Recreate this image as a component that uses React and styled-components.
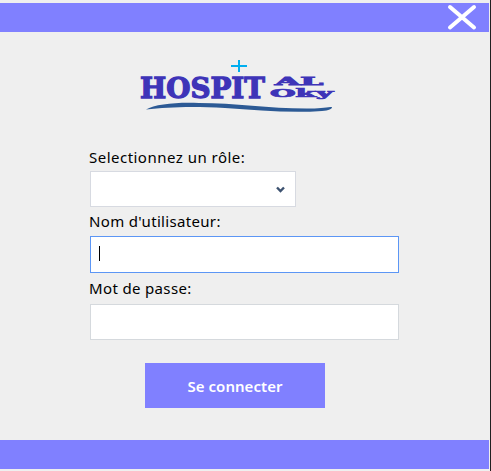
import React from 'react';
import styled, { createGlobalStyle } from 'styled-components';

const GlobalStyle = createGlobalStyle`
  * { box-sizing: border-box; }
  body { margin: 0; background: #efefef; overflow: hidden; }
`;

const Window = styled.main`
  width: 491px;
  height: 471px;
  padding: 3px 1px 2px 0;
  display: flex;
  flex-direction: column;
  background: #efefef;
  border-right: 1px solid #202020;
  font-family: 'Noto Sans', 'Open Sans', sans-serif;
  color: #000;
`;

const Bar = styled.div`
  flex: none;
  height: 29px;
  background: #8080ff;
  display: flex;
  justify-content: flex-end;
`;

const CloseButton = styled.button`
  width: 42px;
  height: 29px;
  padding: 0;
  border: 0;
  background: none;
  svg { display: block; }
`;

const Content = styled.div`
  flex: 1;
  display: flex;
  flex-direction: column;
`;

const Logo = styled.svg`
  display: block;
  flex: none;
  margin: 23px 0 0 134px;
`;

const Form = styled.form`
  margin: 29px 0 0 90px;
  width: 309px;
  display: flex;
  flex-direction: column;
`;

const Label = styled.label`
  height: ${(p) => p.$height}px;
  margin-left: -1px;
  font-size: 15px;
  line-height: 22px;
  letter-spacing: ${(p) => p.$spacing}px;
  white-space: nowrap;
`;

const Select = styled.div`
  width: 206px;
  height: 36px;
  margin-bottom: 3px;
  padding-right: 10px;
  display: flex;
  align-items: center;
  justify-content: flex-end;
  background: #fff;
  border: 1px solid #d7dae1;
`;

const Field = styled.div`
  height: ${(p) => (p.$focused ? 37 : 36)}px;
  margin-bottom: ${(p) => (p.$focused ? 4 : 0)}px;
  padding: 9px 8px;
  background: #fff;
  border: 1px solid ${(p) => (p.$focused ? '#5c96f5' : '#d5d9dd')};
`;

const Caret = styled.span`
  display: block;
  width: 1px;
  height: 15px;
  background: #000;
`;

const Submit = styled.button`
  width: 180px;
  height: 45px;
  margin: 23px 0 0 55px;
  padding: 2px 0 0;
  border: 0;
  background: #8080ff;
  color: #fff;
  font: 600 15px/43px 'Noto Sans', 'Open Sans', sans-serif;
  letter-spacing: 0.05px;
`;

export default function App() {
  return (
    <>
      <GlobalStyle />
      <Window>
        <Bar>
          <CloseButton aria-label="Fermer">
            <svg width="42" height="29" viewBox="0 0 42 29">
              <path d="M3 4 L27 24.5 M27 4 L3 24.5" stroke="#fff" strokeWidth="4" strokeLinecap="round" />
            </svg>
          </CloseButton>
        </Bar>
        <Content>
          <Logo width="206" height="62" viewBox="134 55 206 62" aria-label="Hospital Oky">
            <path d="M239 60 V72 M231 66 H247" stroke="#00aeef" strokeWidth="2" />
            <g fill="#3e34b8" stroke="#3e34b8" fontFamily="'DejaVu Serif', serif" fontWeight="700">
              <text x="140" y="97.5" fontSize="28" strokeWidth="1.3" textLength="125" lengthAdjust="spacingAndGlyphs">HOSPIT</text>
              <text x="275" y="84.8" fontSize="10.5" strokeWidth="0.8" textLength="48" lengthAdjust="spacingAndGlyphs">AL</text>
              <text x="270" y="96.7" fontSize="10.5" strokeWidth="0.7" textLength="63" lengthAdjust="spacingAndGlyphs">Oky</text>
            </g>
            <path
              d="M146 109.5 C155 104 178 102 199 103 C236 103 272 109 311 108.5 C321 108.5 328 107 332 107 C332 109 329 110.5 322 111 C290 113.5 257 110 225 108 C192 106 168 107 146 109.5 Z"
              fill="#2c5a95"
            />
          </Logo>
          <Form>
            <Label $height={25} $spacing={0.48}>Selectionnez un rôle:</Label>
            <Select role="combobox" aria-expanded="false">
              <svg width="9" height="7" viewBox="0 0 9 7">
                <path d="M1 1.5 L4.5 5 L8 1.5" fill="none" stroke="#3d5270" strokeWidth="2.4" />
              </svg>
            </Select>
            <Label $height={26} $spacing={0.33}>Nom d'utilisateur:</Label>
            <Field $focused>
              <Caret />
            </Field>
            <Label $height={27} $spacing={0.35}>Mot de passe:</Label>
            <Field />
            <Submit type="button">Se connecter</Submit>
          </Form>
        </Content>
        <Bar />
      </Window>
    </>
  );
}
